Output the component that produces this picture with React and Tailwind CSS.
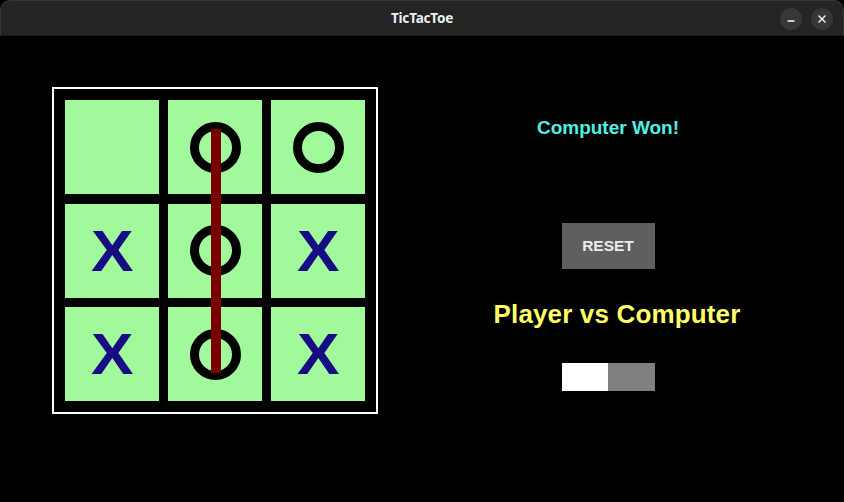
import React from "react";

const board = [
  ["", "O", "O"],
  ["X", "O", "X"],
  ["X", "O", "X"],
];

function Cell({ v }) {
  return (
    <div className="w-[94px] h-[94px] bg-[#a2f99c] flex items-center justify-center">
      {v === "O" && (
        <div className="w-[51px] h-[51px] rounded-full border-[9px] border-black" />
      )}
      {v === "X" && (
        <span
          className="text-[58px] leading-none font-bold text-[#160c84] scale-x-[1.1]"
          style={{ fontFamily: '"Liberation Sans", Arial, sans-serif' }}
        >
          X
        </span>
      )}
    </div>
  );
}

export default function App() {
  return (
    <div
      className="w-[844px] h-[502px] bg-black overflow-hidden flex flex-col"
      style={{ fontFamily: '"Liberation Sans", Arial, sans-serif' }}
    >
      <div className="h-[36px] shrink-0 bg-[#242424] rounded-t-[10px] border-t border-l border-r border-[#363636] border-b-[#1a1a1a] border-b relative flex items-center justify-center">
        <span
          className="text-[13.5px] font-bold text-[#f0f0f0] tracking-[-0.2px]"
          style={{ fontFamily: '"Noto Sans", "Open Sans", sans-serif' }}
        >
          TicTacToe
        </span>
        <div className="absolute right-[10px] top-[7px] flex gap-[9px]">
          <div className="w-[22px] h-[22px] rounded-full bg-[#373737] flex items-center justify-center">
            <svg width="10" height="10" viewBox="0 0 10 10">
              <line x1="1.5" y1="7" x2="8.5" y2="7" stroke="#f0f0f0" strokeWidth="1.6" />
            </svg>
          </div>
          <div className="w-[22px] h-[22px] rounded-full bg-[#373737] flex items-center justify-center">
            <svg width="10" height="10" viewBox="0 0 10 10">
              <line x1="1.5" y1="1.5" x2="8.5" y2="8.5" stroke="#f0f0f0" strokeWidth="1.5" />
              <line x1="8.5" y1="1.5" x2="1.5" y2="8.5" stroke="#f0f0f0" strokeWidth="1.5" />
            </svg>
          </div>
        </div>
      </div>

      <div className="flex pt-[51px] pl-[52px]">
        <div className="relative border-2 border-white bg-black p-[11px] grid grid-cols-[94px_94px_94px] gap-x-[9px] gap-y-[9.5px]">
          {board.flat().map((v, i) => (
            <Cell key={i} v={v} />
          ))}
          <div className="absolute left-[157px] top-[40px] w-[10px] h-[244px] bg-[#7a0000]" />
        </div>

        <div className="w-[460px] flex flex-col items-center">
          <div className="mt-[30px] text-[19px] leading-[22px] font-bold text-[#4ef2e2]">
            Computer Won!
          </div>
          <button className="mt-[84px] w-[93px] h-[46px] bg-[#5f5f5f] text-[#ececec] text-[15.5px] font-bold flex items-center justify-center">
            RESET
          </button>
          <div className="mt-[30px] ml-[18px] text-[26px] leading-[30px] font-bold text-[#ffff66] tracking-[0.15px]">
            Player vs Computer
          </div>
          <div className="mt-[34px] w-[93px] h-[28px] flex">
            <div className="w-1/2 h-full bg-white" />
            <div className="w-1/2 h-full bg-[#808080]" />
          </div>
        </div>
      </div>
    </div>
  );
}
